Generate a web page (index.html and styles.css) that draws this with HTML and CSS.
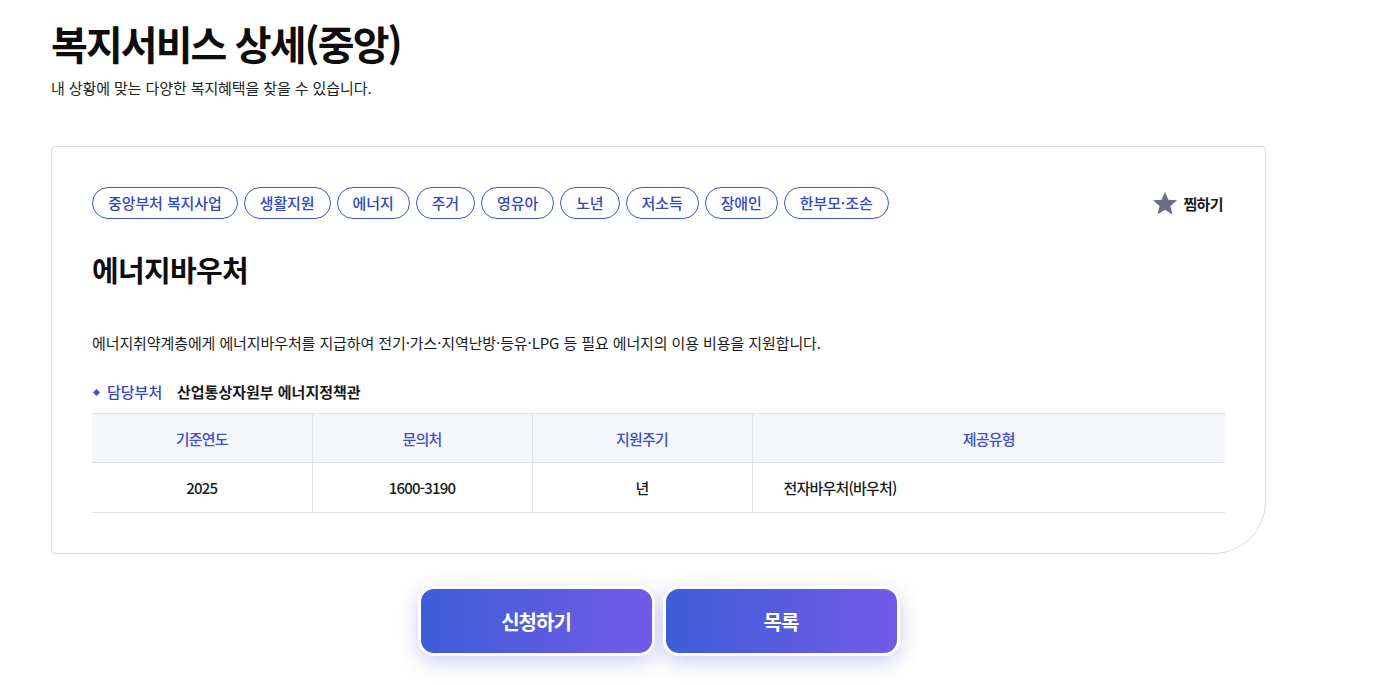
FILE: index.html
```html
<!DOCTYPE html>
<html lang="ko">
<head>
<meta charset="utf-8">
<title>복지서비스 상세(중앙)</title>
<link rel="stylesheet" href="styles.css">
</head>
<body>
<div class="page">
  <header class="page-head">
    <h1 class="page-title">복지서비스 상세(중앙)</h1>
    <p class="page-sub">내 상황에 맞는 다양한 복지혜택을 찾을 수 있습니다.</p>
  </header>

  <section class="card">
    <div class="card-top">
      <ul class="tags">
        <li class="tag">중앙부처 복지사업</li>
        <li class="tag">생활지원</li>
        <li class="tag">에너지</li>
        <li class="tag">주거</li>
        <li class="tag">영유아</li>
        <li class="tag">노년</li>
        <li class="tag">저소득</li>
        <li class="tag">장애인</li>
        <li class="tag">한부모·조손</li>
      </ul>
      <button class="fav" type="button">
        <svg class="fav-icon" viewBox="0 0 24 24" width="26" height="26"><path d="M12 1.5l3.1 7.4 8 .6-6.1 5.2 1.9 7.8L12 18.3l-6.9 4.2 1.9-7.8L.9 9.5l8-.6z" fill="#6b6d84"/></svg>
        <span>찜하기</span>
      </button>
    </div>

    <h2 class="svc-title">에너지바우처</h2>
    <p class="svc-desc">에너지취약계층에게 에너지바우처를 지급하여 전기·가스·지역난방·등유·LPG 등 필요 에너지의 이용 비용을 지원합니다.</p>

    <div class="dept">
      <span class="dept-label">담당부처</span>
      <span class="dept-value">산업통상자원부 에너지정책관</span>
    </div>

    <table class="info">
      <colgroup>
        <col class="c1"><col class="c2"><col class="c3"><col class="c4">
      </colgroup>
      <thead>
        <tr><th>기준연도</th><th>문의처</th><th>지원주기</th><th>제공유형</th></tr>
      </thead>
      <tbody>
        <tr><td>2025</td><td>1600-3190</td><td>년</td><td class="left">전자바우처(바우처)</td></tr>
      </tbody>
    </table>
  </section>

  <div class="actions">
    <button class="btn" type="button">신청하기</button>
    <button class="btn" type="button">목록</button>
  </div>
</div>
</body>
</html>
```

FILE: styles.css
```css
* { box-sizing: border-box; }
html, body { margin: 0; padding: 0; background: #fff; }
body {
  font-family: "Noto Sans CJK KR", "Noto Sans", sans-serif;
  color: #111;
  min-height: 685px;
}
.page {
  width: 1215px;
  margin-left: 51px;
  padding-top: 14px;
  padding-bottom: 30px;
}
.page-title {
  margin: 0;
  font-size: 40px;
  line-height: 58px;
  font-weight: 700;
  letter-spacing: -1.9px;
  color: #0d0d0d;
}
.page-sub {
  margin: 6px 0 0;
  font-size: 15px;
  line-height: 20px;
  color: #222;
  letter-spacing: -0.1px;
}
.card {
  margin-top: 48px;
  border: 1px solid #dcdcdc;
  border-radius: 4px 4px 52px 4px;
  padding: 40px 40px 40px 40px;
}
.card-top {
  display: flex;
  align-items: center;
  justify-content: space-between;
}
.tags {
  list-style: none;
  margin: 0;
  padding: 0;
  display: flex;
  gap: 6px;
}
.tag {
  height: 32px;
  line-height: 30px;
  padding: 0 15px;
  border: 1px solid #3f55c9;
  border-radius: 16px;
  color: #3447bd;
  font-size: 15px;
  font-weight: 500;
  letter-spacing: -0.1px;
}
.fav {
  display: flex;
  align-items: center;
  gap: 5px;
  border: 0;
  background: none;
  padding: 0;
  margin-right: 2px;
  font-family: inherit;
  font-size: 15px;
  font-weight: 700;
  color: #1a1a1a;
  letter-spacing: -0.6px;
}
.svc-title {
  margin: 26px 0 0;
  font-size: 29px;
  line-height: 48px;
  font-weight: 700;
  letter-spacing: -0.7px;
  color: #0d0d0d;
}
.svc-desc {
  margin: 38px 0 0;
  font-size: 15px;
  line-height: 24px;
  letter-spacing: -0.1px;
  color: #1a1a1a;
}
.dept {
  margin-top: 25px;
  display: flex;
  align-items: center;
  font-size: 15px;
  line-height: 24px;
  letter-spacing: 0;
}
.dept-label {
  position: relative;
  padding-left: 15px;
  color: #3447bd;
  font-weight: 500;
  width: 85px;
}
.dept-label::before {
  content: "";
  position: absolute;
  left: 2px;
  top: 10px;
  width: 5px;
  height: 5px;
  background: #3f55c9;
  transform: rotate(45deg);
}
.dept-value {
  font-weight: 700;
  color: #1a1a1a;
}
.info {
  margin-top: 9px;
  width: 100%;
  border-collapse: collapse;
  table-layout: fixed;
  font-size: 15px;
  letter-spacing: -0.8px;
}
.c1, .c2, .c3 { width: 220px; }
.info th {
  height: 49px;
  background: #f5f6fa;
  color: #3f50c4;
  font-weight: 500;
  border-top: 1px solid #dfe1e7;
  border-bottom: 1px solid #dfe1e7;
  border-left: 1px solid #dfe1e7;
}
.info td {
  height: 50px;
  text-align: center;
  font-weight: 500;
  color: #1a1a1a;
  border-bottom: 1px solid #dfe1e7;
  border-left: 1px solid #dfe1e7;
}
.info th:first-child, .info td:first-child { border-left: 0; }
.info td.left { text-align: left; padding-left: 31px; }
.actions {
  display: flex;
  justify-content: center;
  gap: 8px;
  margin-top: 32px;
}
.btn {
  width: 237px;
  height: 70px;
  border: 3px solid #fff;
  border-radius: 16px;
  background: linear-gradient(90deg, #3d5ed7 0%, #735ae8 100%);
  color: #fff;
  font-family: inherit;
  font-size: 20px;
  font-weight: 700;
  letter-spacing: -1px;
  box-shadow: 0 6px 20px rgba(100, 100, 215, 0.32);
}
```
